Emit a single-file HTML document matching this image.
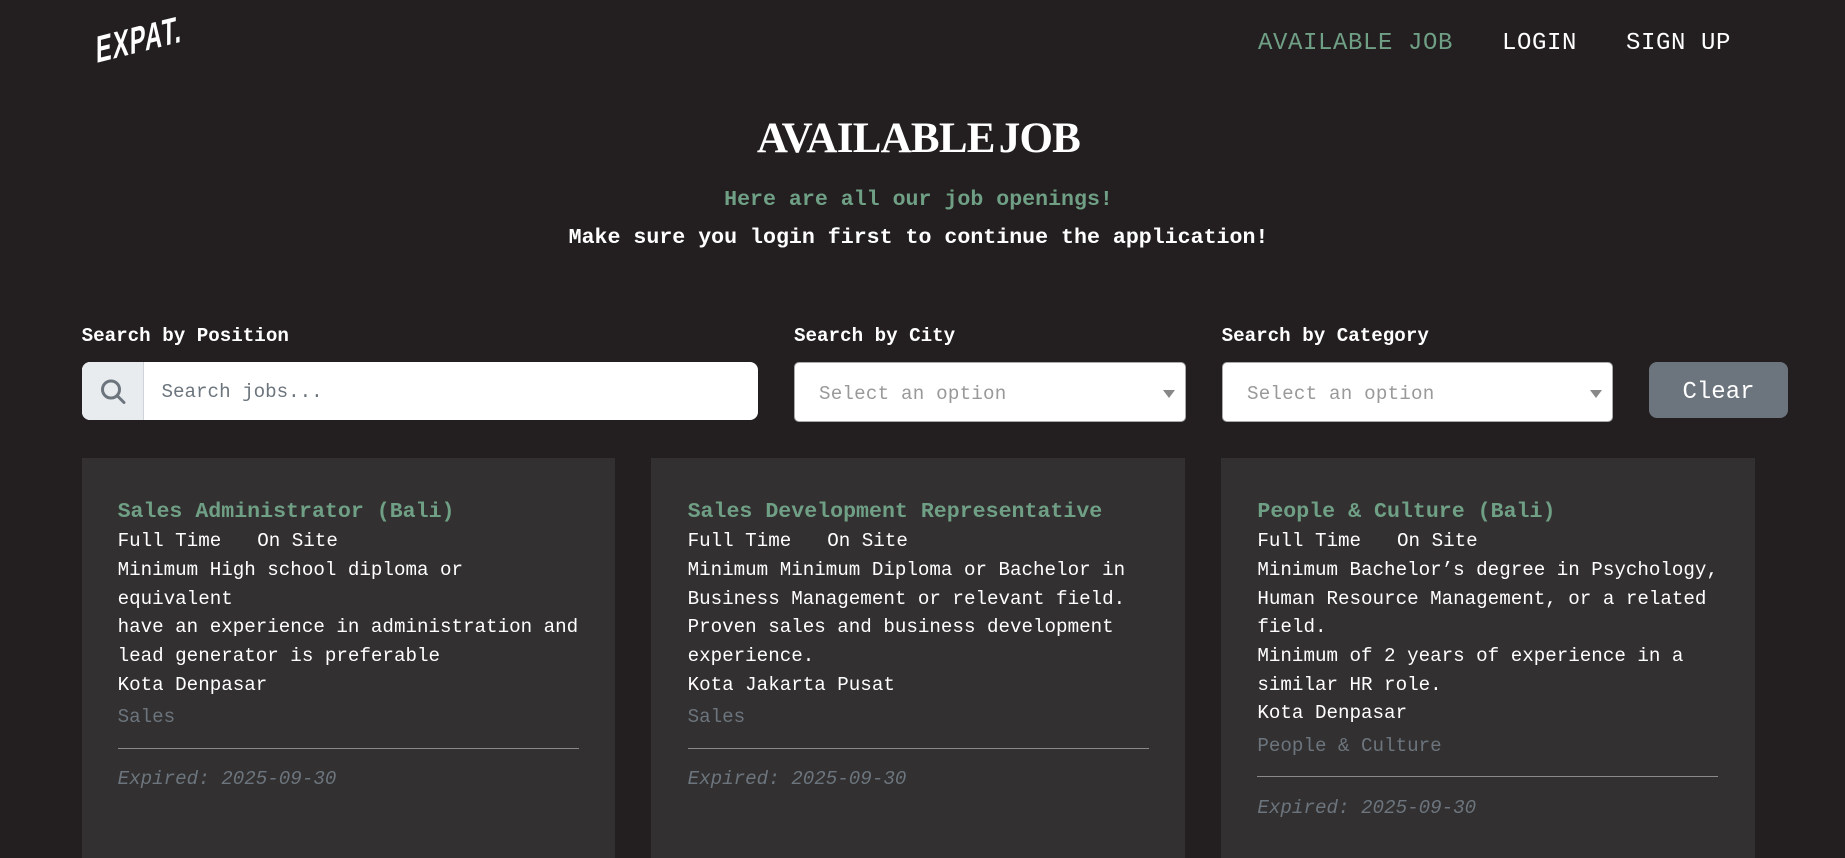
<!DOCTYPE html>
<html><head><meta charset="utf-8"><title>Available Job</title>
<style>
*{box-sizing:border-box}
html,body{margin:0;padding:0}
body{width:1845px;height:825px;overflow:hidden;background:#231f20;position:relative;font-family:"Liberation Mono",monospace;color:#fff}
.a{position:absolute;white-space:nowrap}
.nav{font-size:24px;line-height:30px;top:29px;letter-spacing:.6px}
.lab{font-size:19.2px;font-weight:700;line-height:24px;top:324px}
.sel{position:absolute;top:362px;height:60px;background:#fff;border:1px solid #aaa;border-radius:5px;color:#999;font-size:19.2px;line-height:63px;padding-left:24px;letter-spacing:.2px}
.sel:after{content:"";position:absolute;right:10px;top:27px;border-left:6px solid transparent;border-right:6px solid transparent;border-top:8px solid #888}
.card{position:absolute;top:458px;width:534px;height:400px;background:#323031;padding:38.2px 36px 0}
.card h5{margin:0;font-size:21.6px;line-height:30px;font-weight:700;color:#6f9f85;padding-top:1px}
.card p{margin:0;font-size:19.2px;line-height:28.7px;color:#fff;width:465px;white-space:pre-line}
.card .c{color:#6c757d;margin-top:3.4px}
.card hr{border:0;border-top:1px solid #8a8a8a;margin:16px 0 0;width:461px}
.card .e{color:#6c757d;font-style:italic;margin-top:16.4px}
</style></head><body>
<div class="a" style="left:96px;top:33px;font:700 38px/36px 'Liberation Sans',sans-serif;letter-spacing:2px;transform-origin:0 50%;transform:skewY(-14deg) scaleX(.62)">EXPAT.</div>
<div class="a nav" style="left:1258px;color:#6f9f85">AVAILABLE JOB</div>
<div class="a nav" style="left:1502px">LOGIN</div>
<div class="a nav" style="left:1626px">SIGN UP</div>
<div class="a" style="left:0;width:1837px;text-align:center;top:114px;font:700 43px/50px 'Liberation Serif',serif;word-spacing:-6px;letter-spacing:-.75px">AVAILABLE JOB</div>
<div class="a" style="left:0;width:1837px;text-align:center;top:184px;font-size:21.6px;line-height:32px;font-weight:700;color:#6f9f85">Here are all our job openings!</div>
<div class="a" style="left:0;width:1837px;text-align:center;top:222px;font-size:21.6px;line-height:32px;font-weight:700">Make sure you login first to continue the application!</div>
<div class="a lab" style="left:81.6px">Search by Position</div>
<div class="a lab" style="left:794px">Search by City</div>
<div class="a lab" style="left:1221.6px">Search by Category</div>
<div class="a" style="left:82px;top:362px;width:676px;height:58px;background:#fff;border-radius:8px;overflow:hidden">
<div style="position:absolute;left:0;top:0;width:62px;height:58px;background:#e9ecef;border-right:1px solid #ced4da"></div>
<svg style="position:absolute;left:18px;top:17px" width="26" height="26" viewBox="0 0 26 26" fill="none" stroke="#6c757d" stroke-width="3"><circle cx="11" cy="10.5" r="8.5"/><path d="M17 16.5l7 7" stroke-linecap="round"/></svg>
<div style="position:absolute;left:79.5px;top:1px;line-height:59px;font-size:19.2px;color:#6c757d">Search jobs...</div>
</div>
<div class="sel" style="left:794px;width:392px">Select an option</div>
<div class="sel" style="left:1222px;width:391px">Select an option</div>
<div class="a" style="left:1649px;top:362px;width:139px;height:56px;background:#6c757d;border-radius:8px;text-align:center;font-size:24px;line-height:62px">Clear</div>

<div class="card" style="left:82px;width:533px;padding-left:35.6px">
<h5>Sales Administrator (Bali)</h5>
<p>Full Time<span style="display:inline-block;width:36px"></span>On Site
Minimum High school diploma or
equivalent
have an experience in administration and
lead generator is preferable
Kota Denpasar</p>
<p class="c">Sales</p><hr><p class="e">Expired: 2025-09-30</p>
</div>
<div class="card" style="left:651px;padding-left:36.6px">
<h5>Sales Development Representative</h5>
<p>Full Time<span style="display:inline-block;width:36px"></span>On Site
Minimum Minimum Diploma or Bachelor in
Business Management or relevant field.
Proven sales and business development
experience.
Kota Jakarta Pusat</p>
<p class="c">Sales</p><hr><p class="e">Expired: 2025-09-30</p>
</div>
<div class="card" style="left:1221px;padding-left:36.4px">
<h5>People &amp; Culture (Bali)</h5>
<p>Full Time<span style="display:inline-block;width:36px"></span>On Site
Minimum Bachelor’s degree in Psychology,
Human Resource Management, or a related
field.
Minimum of 2 years of experience in a
similar HR role.
Kota Denpasar</p>
<p class="c">People &amp; Culture</p><hr><p class="e">Expired: 2025-09-30</p>
</div>
</body></html>
